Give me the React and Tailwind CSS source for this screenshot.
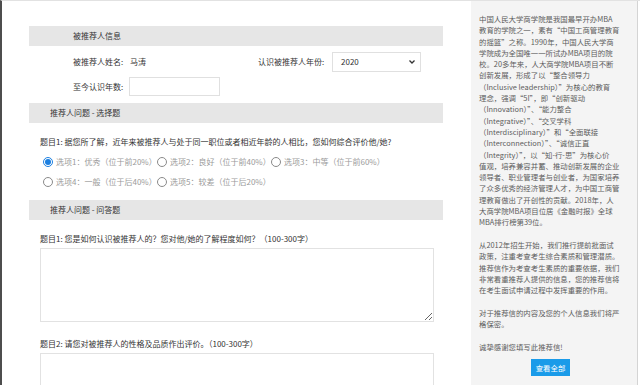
import { useState } from 'react';

const intro = [
  '中国人民大学商学院是我国最早开办MBA',
  '教育的学院之一，素有“中国工商管理教育',
  '的摇篮”之称。1990年，中国人民大学商',
  '学院成为全国唯一一所试办MBA项目的院',
  '校。20多年来，人大商学院MBA项目不断',
  '创新发展，形成了以“整合领导力',
  '（Inclusive leadership）”为核心的教育',
  '理念，强调“5I”，即“创新驱动',
  '（Innovation）”、“能力整合',
  '（Integrative）”、“交叉学科',
  '（Interdisciplinary）”和“全面联接',
  '（Interconnection）”、“诚信正直',
  '（Integrity）”，以“知-行-思”为核心价',
  '值观，培养兼容并蓄、推动创新发展的企业',
  '领导者、职业管理者与创业者，为国家培养',
  '了众多优秀的经济管理人才，为中国工商管',
  '理教育做出了开创性的贡献。2018年，人',
  '大商学院MBA项目位居《金融时报》全球',
  'MBA排行榜第39位。',
];

const policy = [
  '从2012年招生开始，我们推行提前批面试',
  '政策，注重考查考生综合素质和管理潜质。',
  '推荐信作为考查考生素质的重要依据，我们',
  '非常看重推荐人提供的信息，您的推荐信将',
  '在考生面试申请过程中发挥重要的作用。',
];

const privacy = ['对于推荐信的内容及您的个人信息我们将严', '格保密。'];

const options = [
  ['选项1：优秀（位于前20%）', '选项2：良好（位于前40%）', '选项3：中等（位于前60%）'],
  ['选项4：一般（位于后40%）', '选项5：较差（位于后20%）'],
];

const SectionBar = ({ children, indent = 'pl-[21px]' }) => (
  <div className={`h-[20px] bg-[#e6e6e6] flex items-center text-[#333] ${indent}`}>{children}</div>
);

const Radio = ({ checked, label, onClick }) => (
  <label className="w-[114px] flex items-center gap-[3px] cursor-pointer" onClick={onClick}>
    {checked ? (
      <span className="w-[10px] h-[10px] rounded-full border border-[#1c7fe0] flex items-center justify-center">
        <span className="w-[6px] h-[6px] rounded-full bg-[#1c7fe0]" />
      </span>
    ) : (
      <span className="w-[10px] h-[10px] rounded-full border border-[#8a8a8a] bg-white" />
    )}
    <span className="text-[#9a9a9a] whitespace-nowrap">{label}</span>
  </label>
);

const Lines = ({ lines }) => (
  <div>
    {lines.map((l) => (
      <div key={l} className="whitespace-nowrap">{l}</div>
    ))}
  </div>
);

export default function App() {
  const [choice, setChoice] = useState('选项1：优秀（位于前20%）');

  return (
    <div
      className="w-[640px] h-[385px] overflow-hidden flex bg-white border-l-2 border-l-[#4d4d4d] border-t border-t-[#e2e2e2] text-[8px] leading-[12px]"
      style={{ fontFamily: '"Noto Sans CJK SC", "Noto Sans", sans-serif' }}
    >
      <main className="w-[469px] shrink-0 pl-[27px] pt-[25px]">
        <div className="w-[414px]">
          <SectionBar indent="pl-[44px]">被推荐人信息</SectionBar>

          <div className="mt-[6px] h-[20px] flex items-center pl-[44px] text-[#333]">
            <span className="w-[57px]">被推荐人姓名:</span>
            <span className="w-[128px]">马涛</span>
            <span className="w-[74px]">认识被推荐人年份:</span>
            <div className="w-[89px] h-[20px] border border-[#e0e0e0] bg-white flex items-center justify-between pl-[8px] pr-[5px]">
              <span>2020</span>
              <svg width="6" height="4" viewBox="0 0 6 4">
                <path d="M0.5 0.5 L3 3 L5.5 0.5" fill="none" stroke="#333" strokeWidth="1.3" />
              </svg>
            </div>
          </div>

          <div className="mt-[5px] h-[19px] flex items-center pl-[44px] text-[#333]">
            <span className="w-[56px]">至今认识年数:</span>
            <input className="w-[91px] h-[19px] border border-[#e0e0e0] outline-none" />
          </div>

          <div className="mt-[7px]">
            <SectionBar>推荐人问题 - 选择题</SectionBar>
          </div>

          <p className="mt-[13px] pl-[11px] text-[#333]">
            题目1: 据您所了解，近年来被推荐人与处于同一职位或者相近年龄的人相比，您如何综合评价他/她?
          </p>

          <div className="mt-[8px] pl-[14px] flex flex-col gap-[8px]">
            {options.map((row, i) => (
              <div key={i} className="flex h-[12px]">
                {row.map((o) => (
                  <Radio key={o} label={o} checked={choice === o} onClick={() => setChoice(o)} />
                ))}
              </div>
            ))}
          </div>

          <div className="mt-[12px]">
            <SectionBar>推荐人问题 - 问答题</SectionBar>
          </div>

          <p className="mt-[13px] pl-[11px] text-[#333]">
            题目1: 您是如何认识被推荐人的？您对他/她的了解程度如何？（100-300字）
          </p>
          <div className="pl-[11px] mt-[3px]">
            <textarea className="block w-[394px] h-[74px] border border-[#e2e2e2] outline-none resize" />
          </div>

          <p className="mt-[16px] pl-[11px] text-[#333]">题目2: 请您对被推荐人的性格及品质作出评价。（100-300字）</p>
          <div className="pl-[11px] mt-[3px]">
            <textarea className="block w-[394px] h-[74px] border border-[#e2e2e2] outline-none resize" />
          </div>
        </div>
      </main>

      <aside className="w-[166px] shrink-0 bg-[#f4f4f4] pl-[8px] pt-[12px] text-[7.4px] leading-[11.3px] text-[#5c5c5c]">
        <Lines lines={intro} />
        <div className="mt-[11.3px]">
          <Lines lines={policy} />
        </div>
        <div className="mt-[11.3px]">
          <Lines lines={privacy} />
        </div>
        <div className="mt-[11.3px]">诚挚感谢您填写此推荐信!</div>
        <div className="mt-[7px] flex pl-[52px]">
          <button className="w-[39px] h-[17px] bg-[#1a9be9] text-white text-[7.4px]">查看全部</button>
        </div>
      </aside>
      <div className="w-px bg-[#d4d4d4] shrink-0" />
    </div>
  );
}
